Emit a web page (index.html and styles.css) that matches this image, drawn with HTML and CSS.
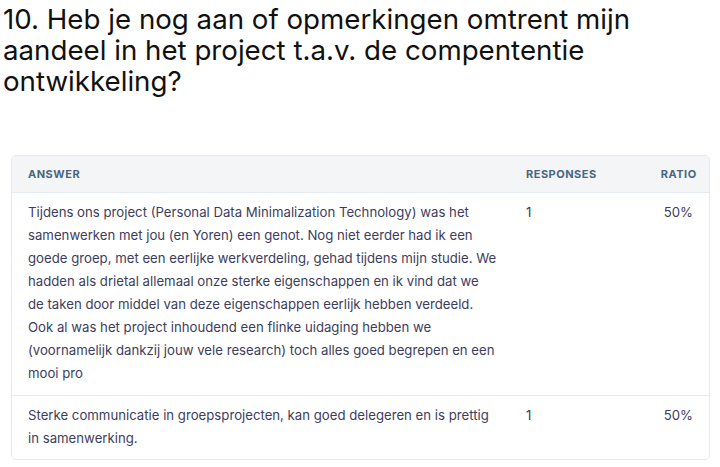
FILE: index.html
```html
<!DOCTYPE html>
<html lang="nl">
<head>
<meta charset="utf-8">
<link rel="stylesheet" href="styles.css">
</head>
<body>
<h2 class="question">10. Heb je nog aan of opmerkingen omtrent mijn aandeel in het project t.a.v. de compententie ontwikkeling?</h2>
<div class="card">
  <div class="row head">
    <div class="cell">ANSWER</div>
    <div class="cell">RESPONSES</div>
    <div class="cell right">RATIO</div>
  </div>
  <div class="row">
    <div class="cell answer">Tijdens ons project (Personal Data Minimalization Technology) was het<br>samenwerken met jou (en Yoren) een genot. Nog niet eerder had ik een<br>goede groep, met een eerlijke werkverdeling, gehad tijdens mijn studie. We<br>hadden als drietal allemaal onze sterke eigenschappen en ik vind dat we<br>de taken door middel van deze eigenschappen eerlijk hebben verdeeld.<br>Ook al was het project inhoudend een flinke uidaging hebben we<br>(voornamelijk dankzij jouw vele research) toch alles goed begrepen en een<br>mooi pro</div>
    <div class="cell">1</div>
    <div class="cell right">50%</div>
  </div>
  <div class="row last">
    <div class="cell answer">Sterke communicatie in groepsprojecten, kan goed delegeren en is prettig<br>in samenwerking.</div>
    <div class="cell">1</div>
    <div class="cell right">50%</div>
  </div>
</div>
</body>
</html>
```
FILE: styles.css
```css
html, body {
  margin: 0;
  padding: 0;
  background: #ffffff;
}
body {
  font-family: Inter, "Noto Sans", sans-serif;
  padding: 0 0 0 3px;
}
.question {
  margin: 0;
  padding-top: 4px;
  font-size: 27.7px;
  font-weight: 400;
  line-height: 31px;
  color: #111111;
  width: 700px;
}
.card {
  margin: 58px 10px 0 8px;
  border: 1px solid #e3eaf3;
  border-radius: 5px;
  overflow: hidden;
}
.row {
  display: grid;
  grid-template-columns: 498px 1fr 100px;
  border-bottom: 1px solid #e3eaf3;
  color: #3d3d5c;
  font-size: 13.2px;
  line-height: 23px;
}
.row.last {
  border-bottom: none;
}
.row .cell {
  padding: 8px 16px 10px;
}
.row .answer {
  white-space: nowrap;
}
.row.last .cell {
  padding: 8px 16px 9px;
}
.row.head {
  background: #f3f5f7;
  color: #4a6582;
  font-size: 11px;
  font-weight: 700;
  letter-spacing: 0.5px;
  line-height: 16px;
}
.row.head .cell {
  padding: 10px 16px 10px;
}
.right {
  text-align: right;
}
```
